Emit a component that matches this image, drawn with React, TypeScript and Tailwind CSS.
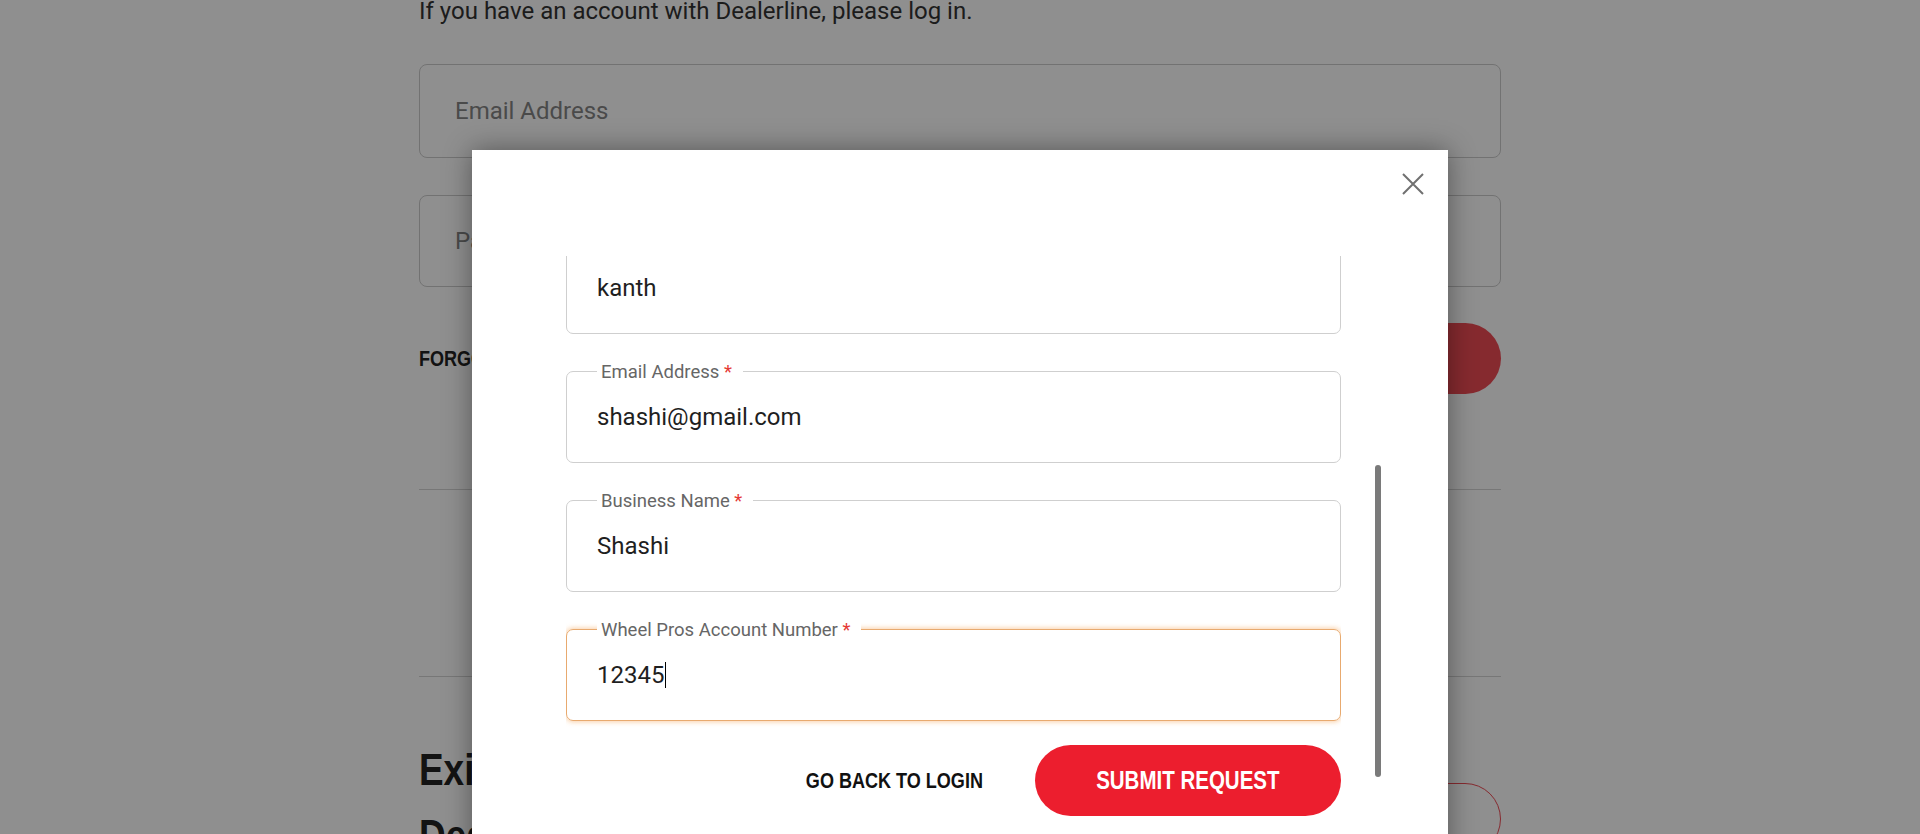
const narrow = "font-['Liberation_Sans',Arial,sans-serif] font-bold inline-block scale-x-[0.82]"

function Field({
  label,
  value,
  focused,
}: {
  label: string
  value: string
  focused?: boolean
}) {
  return (
    <div
      className={`relative flex h-[92px] items-center rounded-[7px] border pl-[30px] text-[24px] text-[#1f1f1f] ${
        focused
          ? 'border-[#e8aa6f] shadow-[0_0_5px_1px_rgba(245,170,95,0.55)]'
          : 'border-[#cfcfcf]'
      }`}
    >
      <span className="absolute -top-[10px] left-[30px] bg-white pl-[4px] pr-[11px] text-[18.5px] leading-5 text-[#666]">
        {label}
        <span className="text-[#e53935]"> *</span>
      </span>
      <span>{value}</span>
      {focused && <span className="ml-px h-[26px] w-px bg-black" />}
    </div>
  )
}

export default function App() {
  return (
    <div className="relative h-[834px] w-full overflow-hidden bg-white font-['Roboto',sans-serif]">
      {/* login page behind the dialog */}
      <div className="mx-auto -mt-[3px] w-[1082px]">
        <p className="text-[24px] leading-7 text-[#333]">
          If you have an account with Dealerline, please log in.
        </p>
        <div className="mt-[39px] flex h-[94px] items-center rounded-lg border border-[#cccccc] pl-[35px] text-[24px] text-[#858585]">
          Email Address
        </div>
        <div className="mt-[37px] flex h-[92px] items-center rounded-lg border border-[#cccccc] pl-[35px] text-[24px] text-[#858585]">
          Password
        </div>
        <div className="mt-[36px] flex h-[71px] items-center justify-between">
          <span className={`${narrow} origin-left text-[22px] text-[#222]`}>FORGOT PASSWORD?</span>
          <button className="h-[71px] w-[306px] rounded-full bg-[#ef4b55] text-white">
            <span className={`${narrow} origin-center text-[25px]`}>LOG IN</span>
          </button>
        </div>
        <div className="mt-[95px] border-t border-[#d4d4d4]" />
        <div className="mt-[186px] border-t border-[#d4d4d4]" />
        <div className="flex items-start justify-between">
          <h2 className={`${narrow} mt-[60px] origin-left text-[45px] leading-[66px] text-[#222]`}>
            Existing Wheel Pros Customer?
            <br />
            Dealerline Access
          </h2>
          <button className="mt-[106px] h-[72px] w-[306px] rounded-full border border-[#ef4b55] text-[#ef4b55]">
            <span className={`${narrow} origin-center text-[22px]`}>REQUEST</span>
          </button>
        </div>
      </div>

      {/* backdrop */}
      <div className="absolute inset-0 bg-black/[0.44]" />

      {/* dialog */}
      <div className="absolute inset-0 flex justify-center pt-[150px]">
        <div className="relative h-[760px] w-[976px] bg-white shadow-[0_0_26px_rgba(0,0,0,0.4)]">
          <div className="flex h-[106px] items-start justify-end pr-[24px] pt-[23px]">
            <button aria-label="Close">
              <svg width="22" height="22" viewBox="0 0 22 22">
                <path d="M1 1L21 21M21 1L1 21" stroke="#707070" strokeWidth="2" />
              </svg>
            </button>
          </div>

          <div className="ml-[94px] h-[560px] w-[775px] overflow-hidden">
            <div className="-mt-[14px] flex flex-col gap-[37px]">
              <Field label="Last Name" value="kanth" />
              <Field label="Email Address" value="shashi@gmail.com" />
              <Field label="Business Name" value="Shashi" />
              <Field label="Wheel Pros Account Number" value="12345" focused />
            </div>
            <div className="mt-[24px] flex items-center justify-end gap-[52px]">
              <button className="text-[#111]">
                <span className={`${narrow} origin-right text-[22px]`}>GO BACK TO LOGIN</span>
              </button>
              <button className="h-[71px] w-[306px] rounded-full bg-[#ec1e2e] text-white">
                <span className={`${narrow} origin-center text-[25px]`}>SUBMIT REQUEST</span>
              </button>
            </div>
          </div>

          {/* scrollbar thumb */}
          <div className="absolute left-[903px] top-[315px] h-[312px] w-[6px] rounded-full bg-[#7a7a7a]" />
        </div>
      </div>
    </div>
  )
}
